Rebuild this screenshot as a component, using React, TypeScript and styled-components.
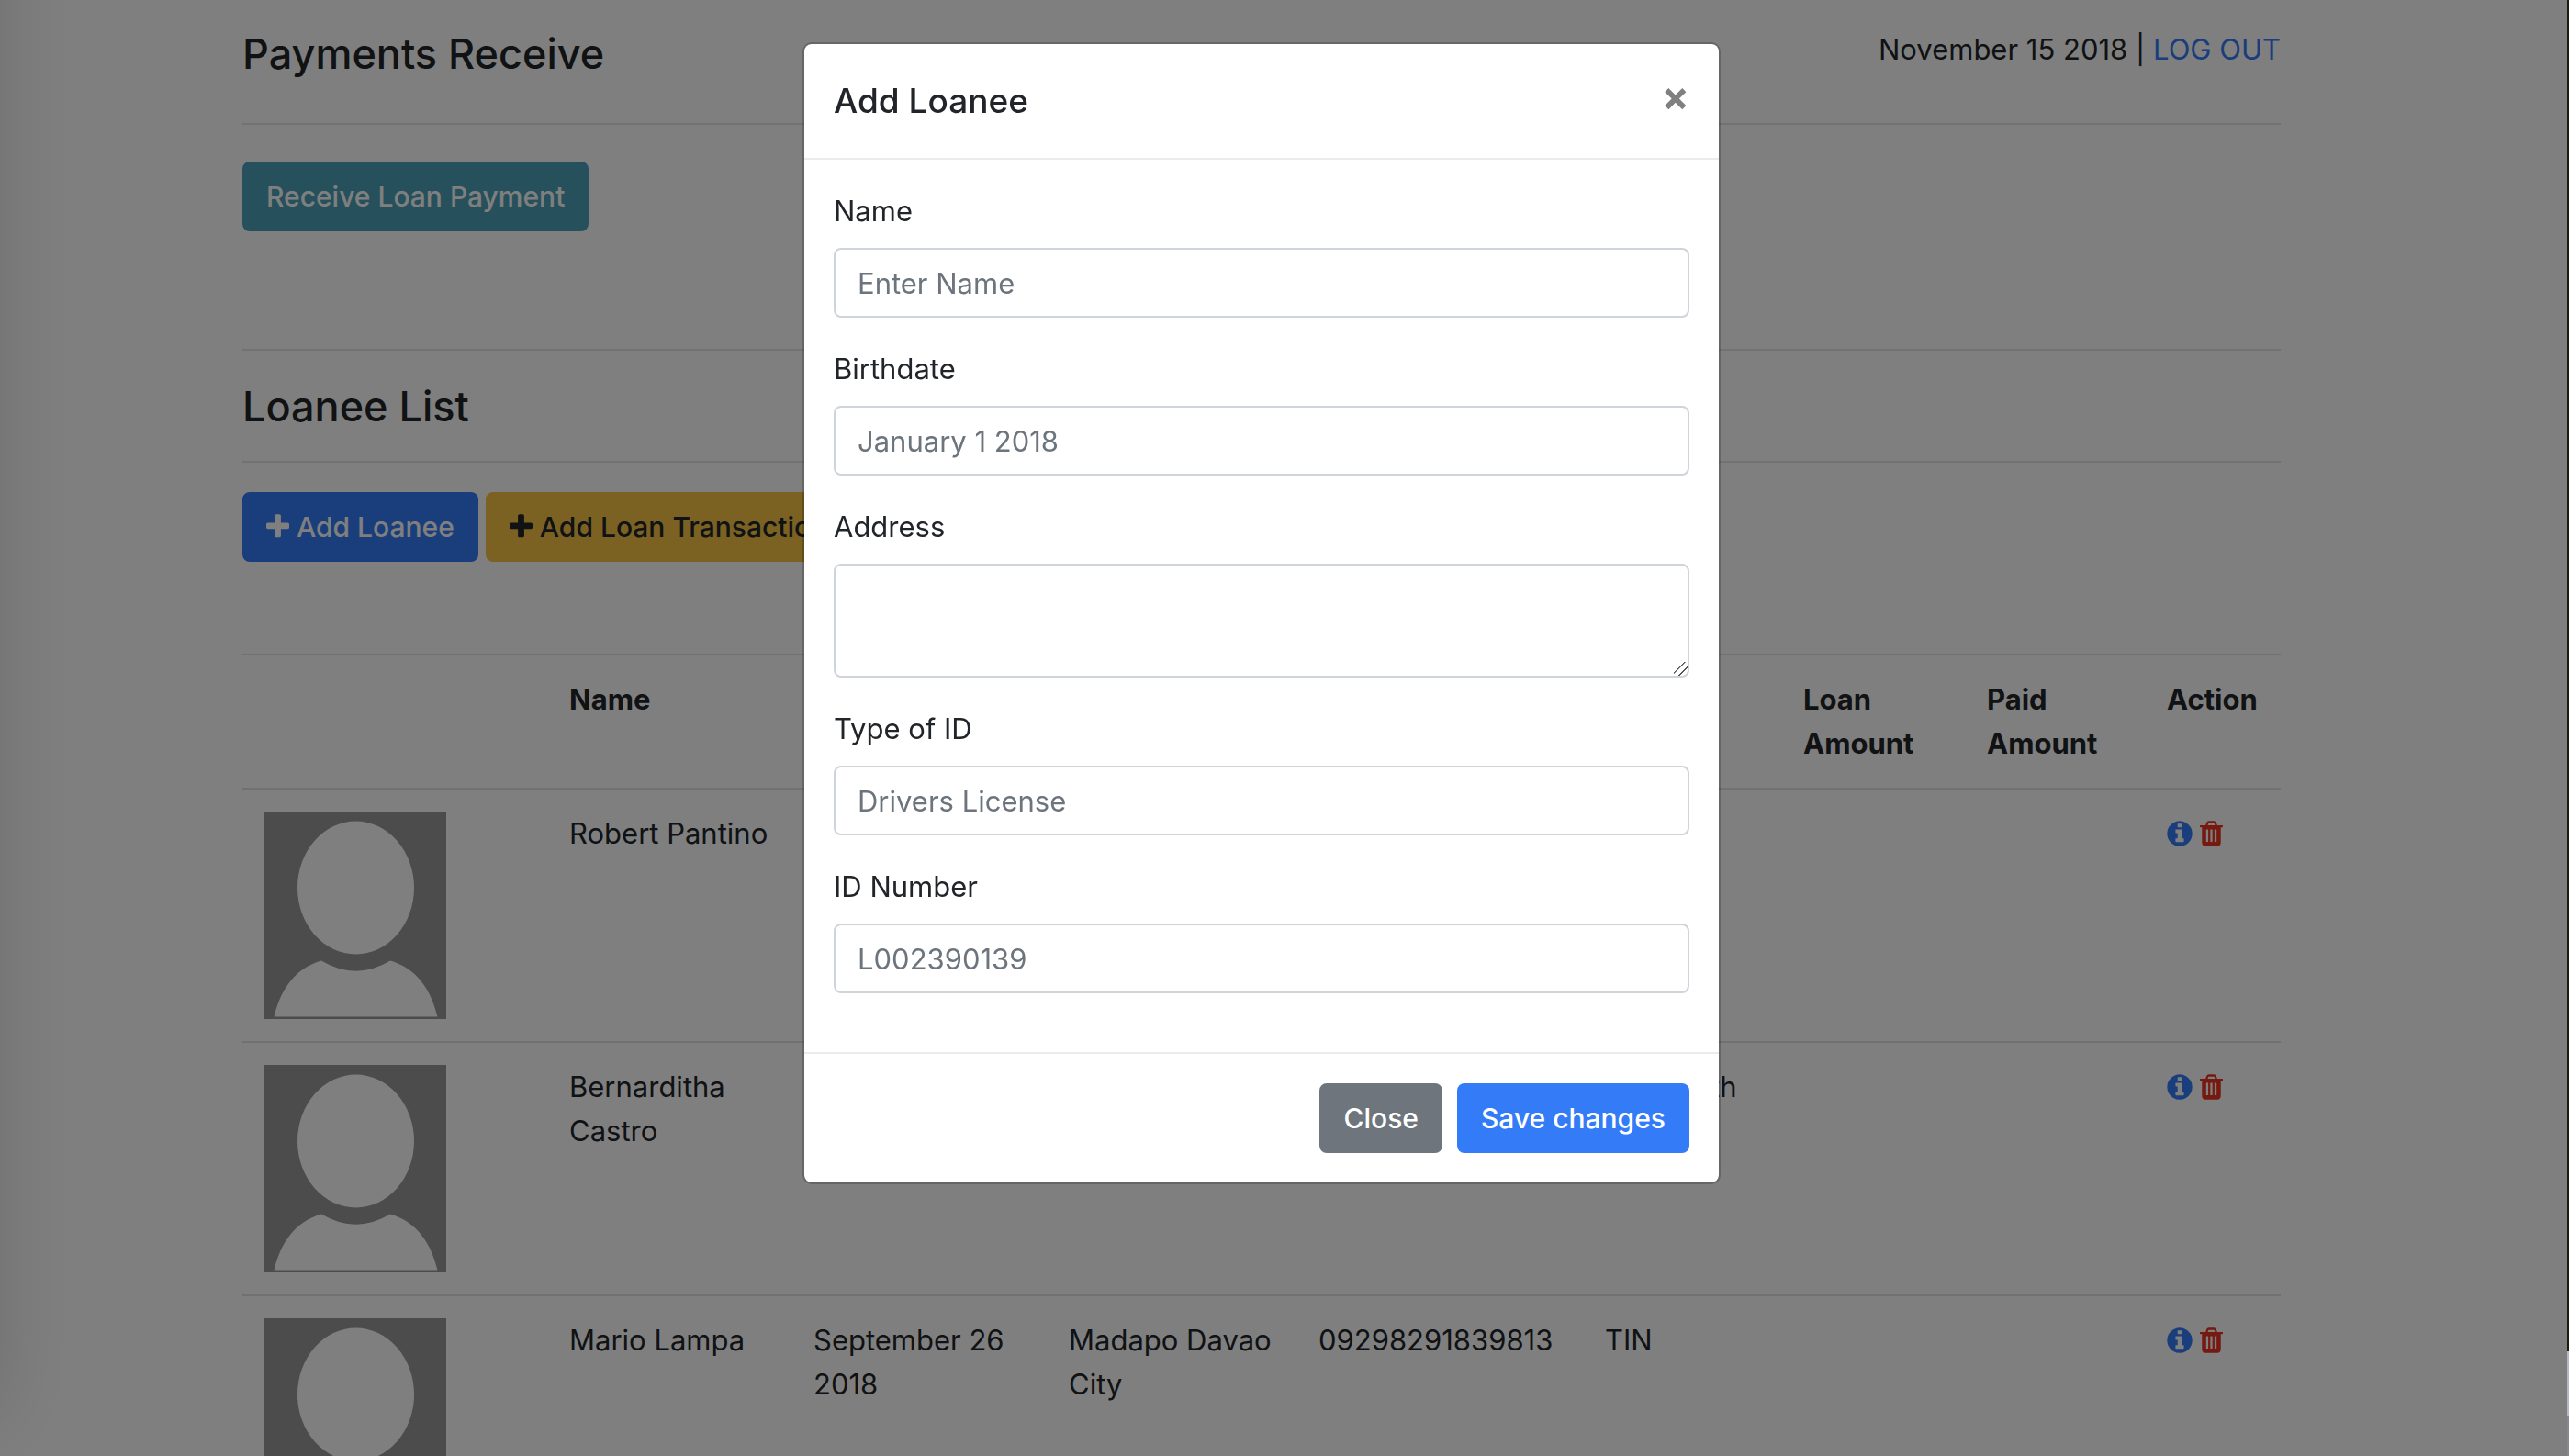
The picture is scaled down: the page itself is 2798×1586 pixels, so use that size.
import React from "react";
import styled, { createGlobalStyle } from "styled-components";

const GlobalStyle = createGlobalStyle`
  *, *::before, *::after { box-sizing: border-box; }
  html, body { margin: 0; height: 100%; overflow: hidden; }
  body {
    background: #fff;
    color: #212529;
    font-family: Inter, "Liberation Sans", sans-serif;
    font-size: 31px;
    line-height: 48px;
  }
  button, input, textarea { font: inherit; }
`;

const Window = styled.div`
  height: 100vh;
  overflow: hidden;
  padding-right: 50px;
`;

const Container = styled.main`
  max-width: 2220px;
  margin: 0 auto;
  padding-top: 30px;
`;

const PageHeader = styled.header`
  display: flex;
  justify-content: space-between;
  align-items: flex-start;
  padding-bottom: 46px;
`;

const Heading = styled.h1`
  margin: 0;
  font-size: 45px;
  font-weight: 500;
  line-height: 58px;
`;

const SectionHeading = styled(Heading).attrs({ as: "h2" })`
  padding: 32px 0 30px;
`;

const Link = styled.a`
  color: #347cf7;
  text-decoration: none;
`;

const Rule = styled.hr`
  margin: 0;
  border: 0;
  border-top: 2px solid rgba(0, 0, 0, 0.1);
`;

const Actions = styled.div<{ $top: number; $bottom: number }>`
  display: flex;
  gap: 8px;
  padding: ${(p) => p.$top}px 0 ${(p) => p.$bottom}px;
`;

const tones = {
  primary: ["#347cf7", "#fff"],
  info: ["#4ca1b7", "#fff"],
  warning: ["#f6c244", "#212529"],
  secondary: ["#6e757c", "#fff"],
};

const Button = styled.button<{ $tone: keyof typeof tones }>`
  display: inline-flex;
  align-items: center;
  gap: 8px;
  padding: 12px 24px;
  border: 2px solid ${(p) => tones[p.$tone][0]};
  border-radius: 8px;
  background: ${(p) => tones[p.$tone][0]};
  color: ${(p) => tones[p.$tone][1]};
  font-size: 30px;
  font-weight: 500;
  white-space: nowrap;
  cursor: pointer;
`;

const Table = styled.table`
  width: 100%;
  table-layout: fixed;
  border-collapse: separate;
  border-spacing: 0;
`;

const HeadCell = styled.th`
  padding: 24px;
  border-top: 2px solid #e0e2e6;
  text-align: left;
  vertical-align: top;
  font-weight: 700;
`;

const Cell = styled.td`
  padding: 24px;
  border-top: 2px solid #e0e2e6;
  vertical-align: top;
`;

const Avatar = styled.svg`
  display: block;
  width: 198px;
  height: 226px;
`;

const RowActions = styled.div`
  display: flex;
  align-items: center;
  gap: 8px;
  height: 48px;
`;

const IconButton = styled.button<{ $color: string }>`
  display: flex;
  padding: 0;
  border: 0;
  background: none;
  color: ${(p) => p.$color};
  cursor: pointer;
`;

const Glyph = styled.svg<{ $w: number }>`
  display: block;
  flex: none;
  width: ${(p) => p.$w}px;
  height: 32px;
  fill: currentColor;
`;

const Backdrop = styled.div`
  position: fixed;
  inset: 0;
  padding: 46px 50px 46px 0;
  background: rgba(0, 0, 0, 0.5);
`;

const EdgeShadow = styled.div`
  position: fixed;
  top: -100px;
  bottom: 40px;
  left: -100px;
  width: 100px;
  border-radius: 20px;
  box-shadow: 0 0 90px rgba(0, 0, 0, 0.14);
`;

const WindowEdge = styled.div`
  position: fixed;
  top: 0;
  right: 0;
  bottom: 0;
  width: 2px;
  background: linear-gradient(#1a1c14 0 1472px, #b4b8c0 1472px 1542px, #85888c 1542px);
`;

const Dialog = styled.section`
  max-width: 1000px;
  margin: 0 auto;
  border: 2px solid rgba(0, 0, 0, 0.2);
  border-radius: 10px;
  background: #fff;
  background-clip: padding-box;
`;

const DialogHeader = styled.header`
  display: flex;
  justify-content: space-between;
  align-items: flex-start;
  padding: 32px;
  border-bottom: 2px solid #e9ecef;
`;

const DialogTitle = styled.h2`
  margin: 0;
  font-size: 37px;
  font-weight: 500;
  line-height: 60px;
`;

const Dismiss = styled.button`
  padding: 0;
  border: 0;
  background: none;
  color: #808080;
  font-size: 45px;
  font-weight: 700;
  line-height: 50px;
  cursor: pointer;
`;

const DialogBody = styled.div`
  padding: 32px 32px 64px;
  display: grid;
  gap: 32px;
`;

const Field = styled.div`
  display: grid;
  gap: 16px;
`;

const Input = styled.input`
  display: block;
  width: 100%;
  padding: 12px 24px;
  height: 76px;
  border: 2px solid #ced4da;
  border-radius: 8px;
  background: #fff;
  color: #495057;
  outline: none;

  &::placeholder { color: #6c757d; opacity: 1; }
`;

const TextArea = styled(Input).attrs({ as: "textarea" })`
  height: 124px;
  resize: vertical;

  &::-webkit-resizer {
    background: linear-gradient(
      135deg,
      transparent 37%,
      #555 38% 43%,
      transparent 44% 64%,
      #555 65% 70%,
      transparent 71%
    );
  }
`;

const DialogFooter = styled.footer`
  display: flex;
  justify-content: flex-end;
  gap: 16px;
  padding: 32px;
  border-top: 2px solid #e9ecef;
`;

const PlusIcon = () => (
  <Glyph $w={25} viewBox="192 0 1408 1792" aria-hidden="true">
    <path d="M1600 736v192q0 40-28 68t-68 28h-416v416q0 40-28 68t-68 28h-192q-40 0-68-28t-28-68v-416h-416q-40 0-68-28t-28-68v-192q0-40 28-68t68-28h416v-416q0-40 28-68t68-28h192q40 0 68 28t28 68v416h416q40 0 68 28t28 68z" />
  </Glyph>
);

const InfoIcon = () => (
  <Glyph $w={28} viewBox="128 0 1536 1792" aria-hidden="true">
    <path d="M1152 1376v-160q0-14-9-23t-23-9h-96v-512q0-14-9-23t-23-9h-320q-14 0-23 9t-9 23v160q0 14 9 23t23 9h96v320h-96q-14 0-23 9t-9 23v160q0 14 9 23t23 9h448q14 0 23-9t9-23zm-128-896v-160q0-14-9-23t-23-9h-192q-14 0-23 9t-9 23v160q0 14 9 23t23 9h192q14 0 23-9t9-23zm640 416q0 209-103 385.5t-279.5 279.5-385.5 103-385.5-103-279.5-279.5-103-385.5 103-385.5 279.5-279.5 385.5-103 385.5 103 279.5 279.5 103 385.5z" />
  </Glyph>
);

const TrashIcon = () => (
  <Glyph $w={25} viewBox="192 0 1408 1792" aria-hidden="true">
    <path d="M704 1376v-704q0-14-9-23t-23-9h-64q-14 0-23 9t-9 23v704q0 14 9 23t23 9h64q14 0 23-9t9-23zm256 0v-704q0-14-9-23t-23-9h-64q-14 0-23 9t-9 23v704q0 14 9 23t23 9h64q14 0 23-9t9-23zm256 0v-704q0-14-9-23t-23-9h-64q-14 0-23 9t-9 23v704q0 14 9 23t23 9h64q14 0 23-9t9-23zm-544-992h448l-48-117q-7-9-17-11h-317q-10 2-17 11zm928 32v64q0 14-9 23t-23 9h-96v948q0 83-47 143.5t-113 60.5h-832q-66 0-113-58.5t-47-141.5v-952h-96q-14 0-23-9t-9-23v-64q0-14 9-23t23-9h309l70-167q15-37 54-63t79-26h320q40 0 79 26t54 63l70 167h309q14 0 23 9t9 23z" />
  </Glyph>
);

const Portrait = () => (
  <Avatar viewBox="0 0 198 226" role="img" aria-label="Profile photo">
    <rect width="198" height="226" fill="#989898" />
    <ellipse cx="99.5" cy="83" rx="63.5" ry="72.5" fill="#fff" />
    <path d="M10.5 223.500C20 185 40 169 62 162.600Q99.500 185 137 162.600C159 169 179 185 188.500 223.500Z" fill="#fff" />
  </Avatar>
);

const columns = [
  { title: "", width: 332 },
  { title: "Name", width: 266 },
  { title: "Birthdate", width: 278 },
  { title: "Address", width: 272 },
  { title: "Contact", width: 312 },
  { title: "ID Type", width: 216 },
  { title: "Loan Amount", width: 200 },
  { title: "Paid Amount", width: 196 },
  { title: "Action", width: 148 },
];

const loanees = [
  { name: "Robert Pantino", birthdate: "", address: "", contact: "", idType: "" },
  { name: "Bernarditha Castro", birthdate: "", address: "", contact: "", idType: "Philhealth" },
  {
    name: "Mario Lampa",
    birthdate: "September 26 2018",
    address: "Madapo Davao City",
    contact: "09298291839813",
    idType: "TIN",
  },
];

export default function App() {
  return (
    <>
      <GlobalStyle />
      <Window>
        <Container>
          <PageHeader>
            <Heading>Payments Receive</Heading>
            <div>
              November 15 2018 | <Link href="#logout">LOG OUT</Link>
            </div>
          </PageHeader>
          <Rule />
          <Actions $top={40} $bottom={128}>
            <Button type="button" $tone="info">Receive Loan Payment</Button>
          </Actions>
          <Rule />
          <SectionHeading>Loanee List</SectionHeading>
          <Rule />
          <Actions $top={32} $bottom={100}>
            <Button type="button" $tone="primary"><PlusIcon />Add Loanee</Button>
            <Button type="button" $tone="warning"><PlusIcon />Add Loan Transaction</Button>
          </Actions>
          <Table>
            <colgroup>
              {columns.map((c, i) => (
                <col key={i} style={{ width: c.width }} />
              ))}
            </colgroup>
            <thead>
              <tr>
                {columns.map((c, i) => (
                  <HeadCell key={i} scope="col">{c.title}</HeadCell>
                ))}
              </tr>
            </thead>
            <tbody>
              {loanees.map((l) => (
                <tr key={l.name}>
                  <Cell><Portrait /></Cell>
                  <Cell>{l.name}</Cell>
                  <Cell>{l.birthdate}</Cell>
                  <Cell>{l.address}</Cell>
                  <Cell>{l.contact}</Cell>
                  <Cell>{l.idType}</Cell>
                  <Cell />
                  <Cell />
                  <Cell>
                    <RowActions>
                      <IconButton type="button" $color="#347cf7" aria-label={`Details of ${l.name}`}>
                        <InfoIcon />
                      </IconButton>
                      <IconButton type="button" $color="#ea3323" aria-label={`Delete ${l.name}`}>
                        <TrashIcon />
                      </IconButton>
                    </RowActions>
                  </Cell>
                </tr>
              ))}
            </tbody>
          </Table>
        </Container>
      </Window>
      <Backdrop>
        <Dialog role="dialog" aria-modal="true" aria-labelledby="dialog-title">
          <DialogHeader>
            <DialogTitle id="dialog-title">Add Loanee</DialogTitle>
            <Dismiss type="button" aria-label="Close dialog">×</Dismiss>
          </DialogHeader>
          <DialogBody>
            <Field>
              <label htmlFor="name">Name</label>
              <Input id="name" placeholder="Enter Name" />
            </Field>
            <Field>
              <label htmlFor="birthdate">Birthdate</label>
              <Input id="birthdate" placeholder="January 1 2018" />
            </Field>
            <Field>
              <label htmlFor="address">Address</label>
              <TextArea id="address" />
            </Field>
            <Field>
              <label htmlFor="id-type">Type of ID</label>
              <Input id="id-type" placeholder="Drivers License" />
            </Field>
            <Field>
              <label htmlFor="id-number">ID Number</label>
              <Input id="id-number" placeholder="L002390139" />
            </Field>
          </DialogBody>
          <DialogFooter>
            <Button type="button" $tone="secondary">Close</Button>
            <Button type="button" $tone="primary">Save changes</Button>
          </DialogFooter>
        </Dialog>
      </Backdrop>
      <EdgeShadow />
      <WindowEdge />
    </>
  );
}
